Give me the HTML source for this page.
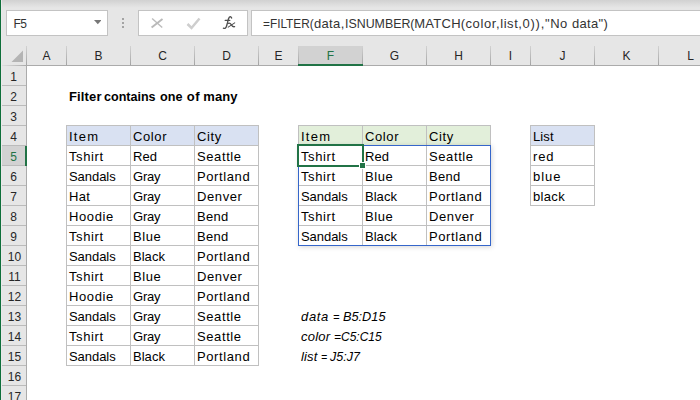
<!DOCTYPE html>
<html><head><meta charset="utf-8"><title>Excel</title><style>
html,body{margin:0;padding:0;}
body{width:700px;height:400px;overflow:hidden;background:#fff;position:relative;font-family:"Liberation Sans",sans-serif;}
div,span{position:absolute;box-sizing:border-box;}
.t{white-space:nowrap;line-height:1;}
.hl{font-size:12px;color:#262626;text-align:center;}
.c{font-size:13px;letter-spacing:0.6px;color:#000;}
</style></head><body>
<div style="left:0;top:0;width:700px;height:66px;background:#e6e6e6"></div>
<div style="left:0;top:0;width:700px;height:8px;background:linear-gradient(to bottom,#d1d1d1 0%,#dcdcdc 50%,#e6e6e6 100%)"></div>
<div style="left:0;top:66px;width:27px;height:334px;background:#e6e6e6"></div>
<div style="left:6px;top:10px;width:102px;height:26px;background:#fff;border:1px solid #c3c3c3"></div>
<div class="t" style="left:13.5px;top:18px;font-size:12px;letter-spacing:-0.5px;color:#333">F5</div>
<svg style="position:absolute;left:93.6px;top:20px" width="7.6" height="4.75" viewBox="0 0 8 5"><path d="M0 0H8L4 4.5Z" fill="#777"/></svg>
<div style="left:122px;top:18px;width:2px;height:2px;background:#a3a3a3"></div>
<div style="left:122px;top:22px;width:2px;height:2px;background:#a3a3a3"></div>
<div style="left:122px;top:26px;width:2px;height:2px;background:#a3a3a3"></div>
<div style="left:138px;top:10px;width:110px;height:26px;background:#fff;border:1px solid #c3c3c3"></div>
<svg style="position:absolute;left:150px;top:17px" width="14" height="12" viewBox="0 0 14 12"><path d="M2.1 1.5L12.2 10.6" stroke="#bcbcbc" stroke-width="1.4" fill="none"/><path d="M12.5 2.0L1.6 10.6" stroke="#b9b9b9" stroke-width="1.9" fill="none"/></svg>
<svg style="position:absolute;left:186px;top:16px" width="16" height="14" viewBox="0 0 16 14"><path d="M1.5 8L5.5 12L13.5 2.5" stroke="#cecece" stroke-width="2.5" fill="none"/></svg>
<svg style="position:absolute;left:218px;top:12px" width="24" height="22" viewBox="0 0 24 22"><g fill="none" stroke="#505050" stroke-linecap="round"><path d="M13.6 6.0C13.6 4.7 12.2 4.4 11.3 5.3C10.3 6.4 10.0 8.4 9.4 11.0L8.5 14.3C8.0 16.0 6.9 16.9 5.4 16.2" stroke-width="1.35"/><path d="M7.2 8.4H11.8" stroke-width="1.2"/><path d="M10.4 11.3C11.9 10.9 12.6 11.6 13.4 12.9C14.2 14.2 15.0 15.1 16.6 14.7" stroke-width="1.3"/><path d="M16.7 10.9L10.2 15.1" stroke-width="1.05"/></g></svg>
<div style="left:251px;top:10px;width:460px;height:26px;background:#fff;border:1px solid #c3c3c3"></div>
<div class="t" style="left:263.2px;top:17px;font-size:13px;color:#333;white-space:pre;transform:scaleX(0.9094);transform-origin:0 0">=FILTER(</div>
<div class="t" style="left:313.9px;top:17px;font-size:13px;color:#333;white-space:pre;letter-spacing:0.376px">data,</div>
<div class="t" style="left:344.7px;top:17px;font-size:13px;color:#333;white-space:pre;transform:scaleX(0.9527);transform-origin:0 0">ISNUMBER(</div>
<div class="t" style="left:414.2px;top:17px;font-size:13px;color:#333;white-space:pre;letter-spacing:0.285px">MATCH(</div>
<div class="t" style="left:465.5px;top:17px;font-size:13px;color:#333;white-space:pre;letter-spacing:0.603px">color,</div>
<div class="t" style="left:500.2px;top:17px;font-size:13px;color:#333;white-space:pre;letter-spacing:0.560px">list,</div>
<div class="t" style="left:522.5px;top:17px;font-size:13px;color:#333;white-space:pre;letter-spacing:0.775px">0)),</div>
<div class="t" style="left:545.1px;top:17px;font-size:13px;color:#333;white-space:pre;letter-spacing:0.510px">&quot;No </div>
<div class="t" style="left:572.0px;top:17px;font-size:13px;color:#333;white-space:pre;letter-spacing:0.292px">data&quot;)</div>
<div style="left:298px;top:46px;width:65px;height:20px;background:#d2d2d2"></div>
<div class="t hl" style="left:27px;top:50px;width:39px;color:#262626">A</div>
<div class="t hl" style="left:67px;top:50px;width:63px;color:#262626">B</div>
<div class="t hl" style="left:131px;top:50px;width:63px;color:#262626">C</div>
<div class="t hl" style="left:195px;top:50px;width:63px;color:#262626">D</div>
<div class="t hl" style="left:259px;top:50px;width:39px;color:#262626">E</div>
<div class="t hl" style="left:299px;top:50px;width:63px;color:#217346">F</div>
<div class="t hl" style="left:363px;top:50px;width:63px;color:#262626">G</div>
<div class="t hl" style="left:427px;top:50px;width:63px;color:#262626">H</div>
<div class="t hl" style="left:491px;top:50px;width:39px;color:#262626">I</div>
<div class="t hl" style="left:531px;top:50px;width:63px;color:#262626">J</div>
<div class="t hl" style="left:595px;top:50px;width:63px;color:#262626">K</div>
<div class="t hl" style="left:659px;top:50px;width:63px;color:#262626">L</div>
<div style="left:26px;top:46px;width:1px;height:20px;background:linear-gradient(to bottom,#d2d2d2,#a2a2a2)"></div>
<div style="left:66px;top:46px;width:1px;height:20px;background:linear-gradient(to bottom,#d2d2d2,#a2a2a2)"></div>
<div style="left:130px;top:46px;width:1px;height:20px;background:linear-gradient(to bottom,#d2d2d2,#a2a2a2)"></div>
<div style="left:194px;top:46px;width:1px;height:20px;background:linear-gradient(to bottom,#d2d2d2,#a2a2a2)"></div>
<div style="left:258px;top:46px;width:1px;height:20px;background:linear-gradient(to bottom,#d2d2d2,#a2a2a2)"></div>
<div style="left:298px;top:46px;width:1px;height:20px;background:linear-gradient(to bottom,#d2d2d2,#a2a2a2)"></div>
<div style="left:362px;top:46px;width:1px;height:20px;background:linear-gradient(to bottom,#d2d2d2,#a2a2a2)"></div>
<div style="left:426px;top:46px;width:1px;height:20px;background:linear-gradient(to bottom,#d2d2d2,#a2a2a2)"></div>
<div style="left:490px;top:46px;width:1px;height:20px;background:linear-gradient(to bottom,#d2d2d2,#a2a2a2)"></div>
<div style="left:530px;top:46px;width:1px;height:20px;background:linear-gradient(to bottom,#d2d2d2,#a2a2a2)"></div>
<div style="left:594px;top:46px;width:1px;height:20px;background:linear-gradient(to bottom,#d2d2d2,#a2a2a2)"></div>
<div style="left:658px;top:46px;width:1px;height:20px;background:linear-gradient(to bottom,#d2d2d2,#a2a2a2)"></div>
<div style="left:2px;top:65px;width:698px;height:1px;background:#ababab"></div>
<div style="left:2px;top:65px;width:24px;height:1px;background:linear-gradient(to right,#dedede,#ababab)"></div>
<div style="left:298px;top:64px;width:65px;height:2px;background:#217346"></div>
<svg style="position:absolute;left:11px;top:50px" width="13" height="13" viewBox="0 0 13 13"><path d="M12 0.5V12H0.5Z" fill="#b4b4b4"/></svg>
<div style="left:2px;top:146px;width:24px;height:20px;background:#d2d2d2"></div>
<div class="t hl" style="left:1.7px;top:71px;width:24px;color:#262626">1</div>
<div style="left:2px;top:85px;width:25px;height:1px;background:#bbbbbb"></div>
<div class="t hl" style="left:1.7px;top:91px;width:24px;color:#262626">2</div>
<div style="left:2px;top:105px;width:25px;height:1px;background:#bbbbbb"></div>
<div class="t hl" style="left:1.7px;top:111px;width:24px;color:#262626">3</div>
<div style="left:2px;top:125px;width:25px;height:1px;background:#bbbbbb"></div>
<div class="t hl" style="left:1.7px;top:131px;width:24px;color:#262626">4</div>
<div style="left:2px;top:145px;width:25px;height:1px;background:#bbbbbb"></div>
<div class="t hl" style="left:1.7px;top:151px;width:24px;color:#217346">5</div>
<div style="left:2px;top:165px;width:25px;height:1px;background:#bbbbbb"></div>
<div class="t hl" style="left:1.7px;top:171px;width:24px;color:#262626">6</div>
<div style="left:2px;top:185px;width:25px;height:1px;background:#bbbbbb"></div>
<div class="t hl" style="left:1.7px;top:191px;width:24px;color:#262626">7</div>
<div style="left:2px;top:205px;width:25px;height:1px;background:#bbbbbb"></div>
<div class="t hl" style="left:1.7px;top:211px;width:24px;color:#262626">8</div>
<div style="left:2px;top:225px;width:25px;height:1px;background:#bbbbbb"></div>
<div class="t hl" style="left:1.7px;top:231px;width:24px;color:#262626">9</div>
<div style="left:2px;top:245px;width:25px;height:1px;background:#bbbbbb"></div>
<div class="t hl" style="left:2.5px;top:251px;width:24px;color:#262626">10</div>
<div style="left:2px;top:265px;width:25px;height:1px;background:#bbbbbb"></div>
<div class="t hl" style="left:2.5px;top:271px;width:24px;color:#262626">11</div>
<div style="left:2px;top:285px;width:25px;height:1px;background:#bbbbbb"></div>
<div class="t hl" style="left:2.5px;top:291px;width:24px;color:#262626">12</div>
<div style="left:2px;top:305px;width:25px;height:1px;background:#bbbbbb"></div>
<div class="t hl" style="left:2.5px;top:311px;width:24px;color:#262626">13</div>
<div style="left:2px;top:325px;width:25px;height:1px;background:#bbbbbb"></div>
<div class="t hl" style="left:2.5px;top:331px;width:24px;color:#262626">14</div>
<div style="left:2px;top:345px;width:25px;height:1px;background:#bbbbbb"></div>
<div class="t hl" style="left:2.5px;top:351px;width:24px;color:#262626">15</div>
<div style="left:2px;top:365px;width:25px;height:1px;background:#bbbbbb"></div>
<div class="t hl" style="left:2.5px;top:371px;width:24px;color:#262626">16</div>
<div style="left:2px;top:385px;width:25px;height:1px;background:#bbbbbb"></div>
<div class="t hl" style="left:2.5px;top:391px;width:24px;color:#262626">17</div>
<div style="left:2px;top:405px;width:25px;height:1px;background:#bbbbbb"></div>
<div style="left:26px;top:66px;width:1px;height:334px;background:#ababab"></div>
<div style="left:25px;top:146px;width:2px;height:20px;background:#217346"></div>
<div style="left:0;top:0;width:1px;height:400px;background:#0f6f3a"></div>
<div style="left:1px;top:0;width:1px;height:400px;background:#ebe8ea"></div>
<div style="left:66px;top:125px;width:192px;height:20px;background:#d9e1f2"></div>
<div style="left:66px;top:125px;width:193px;height:1px;background:#c0c0c0"></div>
<div style="left:66px;top:145px;width:193px;height:1px;background:#c0c0c0"></div>
<div style="left:66px;top:165px;width:193px;height:1px;background:#c0c0c0"></div>
<div style="left:66px;top:185px;width:193px;height:1px;background:#c0c0c0"></div>
<div style="left:66px;top:205px;width:193px;height:1px;background:#c0c0c0"></div>
<div style="left:66px;top:225px;width:193px;height:1px;background:#c0c0c0"></div>
<div style="left:66px;top:245px;width:193px;height:1px;background:#c0c0c0"></div>
<div style="left:66px;top:265px;width:193px;height:1px;background:#c0c0c0"></div>
<div style="left:66px;top:285px;width:193px;height:1px;background:#c0c0c0"></div>
<div style="left:66px;top:305px;width:193px;height:1px;background:#c0c0c0"></div>
<div style="left:66px;top:325px;width:193px;height:1px;background:#c0c0c0"></div>
<div style="left:66px;top:345px;width:193px;height:1px;background:#c0c0c0"></div>
<div style="left:66px;top:365px;width:193px;height:1px;background:#c0c0c0"></div>
<div style="left:66px;top:125px;width:1px;height:241px;background:#c0c0c0"></div>
<div style="left:130px;top:125px;width:1px;height:241px;background:#c0c0c0"></div>
<div style="left:194px;top:125px;width:1px;height:241px;background:#c0c0c0"></div>
<div style="left:258px;top:125px;width:1px;height:241px;background:#c0c0c0"></div>
<div class="t c" style="left:69px;top:130px;letter-spacing:1.25px">Item</div>
<div class="t c" style="left:133px;top:130px">Color</div>
<div class="t c" style="left:197px;top:130px">City</div>
<div class="t c" style="left:69px;top:150px">Tshirt</div>
<div class="t c" style="left:133px;top:150px;letter-spacing:0.1px">Red</div>
<div class="t c" style="left:197px;top:150px">Seattle</div>
<div class="t c" style="left:69px;top:170px;letter-spacing:-0.05px">Sandals</div>
<div class="t c" style="left:133px;top:170px;letter-spacing:-0.2px">Gray</div>
<div class="t c" style="left:197px;top:170px">Portland</div>
<div class="t c" style="left:69px;top:190px;letter-spacing:0.3px">Hat</div>
<div class="t c" style="left:133px;top:190px;letter-spacing:-0.2px">Gray</div>
<div class="t c" style="left:197px;top:190px">Denver</div>
<div class="t c" style="left:69px;top:210px">Hoodie</div>
<div class="t c" style="left:133px;top:210px;letter-spacing:-0.2px">Gray</div>
<div class="t c" style="left:197px;top:210px;letter-spacing:0.27px">Bend</div>
<div class="t c" style="left:69px;top:230px">Tshirt</div>
<div class="t c" style="left:133px;top:230px">Blue</div>
<div class="t c" style="left:197px;top:230px;letter-spacing:0.27px">Bend</div>
<div class="t c" style="left:69px;top:250px;letter-spacing:-0.05px">Sandals</div>
<div class="t c" style="left:133px;top:250px;letter-spacing:0.03px">Black</div>
<div class="t c" style="left:197px;top:250px">Portland</div>
<div class="t c" style="left:69px;top:270px">Tshirt</div>
<div class="t c" style="left:133px;top:270px">Blue</div>
<div class="t c" style="left:197px;top:270px">Denver</div>
<div class="t c" style="left:69px;top:290px">Hoodie</div>
<div class="t c" style="left:133px;top:290px;letter-spacing:-0.2px">Gray</div>
<div class="t c" style="left:197px;top:290px">Portland</div>
<div class="t c" style="left:69px;top:310px;letter-spacing:-0.05px">Sandals</div>
<div class="t c" style="left:133px;top:310px;letter-spacing:-0.2px">Gray</div>
<div class="t c" style="left:197px;top:310px">Seattle</div>
<div class="t c" style="left:69px;top:330px">Tshirt</div>
<div class="t c" style="left:133px;top:330px;letter-spacing:-0.2px">Gray</div>
<div class="t c" style="left:197px;top:330px">Seattle</div>
<div class="t c" style="left:69px;top:350px;letter-spacing:-0.05px">Sandals</div>
<div class="t c" style="left:133px;top:350px;letter-spacing:0.03px">Black</div>
<div class="t c" style="left:197px;top:350px">Portland</div>
<div style="left:298px;top:125px;width:192px;height:20px;background:#e2efda"></div>
<div style="left:298px;top:125px;width:193px;height:1px;background:#c0c0c0"></div>
<div style="left:298px;top:145px;width:193px;height:1px;background:#c0c0c0"></div>
<div style="left:298px;top:165px;width:193px;height:1px;background:#c0c0c0"></div>
<div style="left:298px;top:185px;width:193px;height:1px;background:#c0c0c0"></div>
<div style="left:298px;top:205px;width:193px;height:1px;background:#c0c0c0"></div>
<div style="left:298px;top:225px;width:193px;height:1px;background:#c0c0c0"></div>
<div style="left:298px;top:245px;width:193px;height:1px;background:#c0c0c0"></div>
<div style="left:298px;top:125px;width:1px;height:121px;background:#c0c0c0"></div>
<div style="left:362px;top:125px;width:1px;height:121px;background:#c0c0c0"></div>
<div style="left:426px;top:125px;width:1px;height:121px;background:#c0c0c0"></div>
<div style="left:490px;top:125px;width:1px;height:121px;background:#c0c0c0"></div>
<div class="t c" style="left:301px;top:130px;letter-spacing:1.25px">Item</div>
<div class="t c" style="left:365px;top:130px">Color</div>
<div class="t c" style="left:429px;top:130px">City</div>
<div class="t c" style="left:301px;top:150px">Tshirt</div>
<div class="t c" style="left:365px;top:150px;letter-spacing:0.1px">Red</div>
<div class="t c" style="left:429px;top:150px">Seattle</div>
<div class="t c" style="left:301px;top:170px">Tshirt</div>
<div class="t c" style="left:365px;top:170px">Blue</div>
<div class="t c" style="left:429px;top:170px;letter-spacing:0.27px">Bend</div>
<div class="t c" style="left:301px;top:190px;letter-spacing:-0.05px">Sandals</div>
<div class="t c" style="left:365px;top:190px;letter-spacing:0.03px">Black</div>
<div class="t c" style="left:429px;top:190px">Portland</div>
<div class="t c" style="left:301px;top:210px">Tshirt</div>
<div class="t c" style="left:365px;top:210px">Blue</div>
<div class="t c" style="left:429px;top:210px">Denver</div>
<div class="t c" style="left:301px;top:230px;letter-spacing:-0.05px">Sandals</div>
<div class="t c" style="left:365px;top:230px;letter-spacing:0.03px">Black</div>
<div class="t c" style="left:429px;top:230px">Portland</div>
<div style="left:530px;top:125px;width:64px;height:20px;background:#d9e1f2"></div>
<div style="left:530px;top:125px;width:65px;height:1px;background:#c0c0c0"></div>
<div style="left:530px;top:145px;width:65px;height:1px;background:#c0c0c0"></div>
<div style="left:530px;top:165px;width:65px;height:1px;background:#c0c0c0"></div>
<div style="left:530px;top:185px;width:65px;height:1px;background:#c0c0c0"></div>
<div style="left:530px;top:205px;width:65px;height:1px;background:#c0c0c0"></div>
<div style="left:530px;top:125px;width:1px;height:81px;background:#c0c0c0"></div>
<div style="left:594px;top:125px;width:1px;height:81px;background:#c0c0c0"></div>
<div class="t c" style="left:533px;top:130px;letter-spacing:0.1px">List</div>
<div class="t c" style="left:533px;top:150px;letter-spacing:0.8px">red</div>
<div class="t c" style="left:533px;top:170px;letter-spacing:0.97px">blue</div>
<div class="t c" style="left:533px;top:190px;letter-spacing:0.32px">black</div>
<div class="t" style="left:69px;top:90px;font-size:13px;font-weight:bold;color:#000;letter-spacing:0.15px">Filter</div>
<div class="t" style="left:104.4px;top:90px;font-size:13px;font-weight:bold;color:#000;transform:scaleX(0.965);transform-origin:0 0">contains</div>
<div class="t" style="left:159.9px;top:90px;font-size:13px;font-weight:bold;color:#000;transform:scaleX(0.97);transform-origin:0 0">one</div>
<div class="t" style="left:186.8px;top:90px;font-size:13px;font-weight:bold;color:#000;letter-spacing:0.5px">of</div>
<div class="t" style="left:203.3px;top:90px;font-size:13px;font-weight:bold;color:#000;letter-spacing:0.1px">many</div>
<div class="t" style="left:301.0px;top:310px;font-size:13px;font-style:italic;color:#000;white-space:pre;letter-spacing:0.676px">data </div>
<div class="t" style="left:333.3px;top:310px;font-size:13px;font-style:italic;color:#000;white-space:pre;transform:scaleX(0.8556);transform-origin:0 0">= </div>
<div class="t" style="left:342.9px;top:310px;font-size:13px;font-style:italic;color:#000;white-space:pre;transform:scaleX(0.9797);transform-origin:0 0">B5:D15</div>
<div class="t" style="left:301.0px;top:330px;font-size:13px;font-style:italic;color:#000;white-space:pre;letter-spacing:0.233px">color </div>
<div class="t" style="left:334.2px;top:330px;font-size:13px;font-style:italic;color:#000;white-space:pre;transform:scaleX(0.9232);transform-origin:0 0">=C5:C15</div>
<div class="t" style="left:301.0px;top:350px;font-size:13px;font-style:italic;color:#000;white-space:pre;letter-spacing:0.120px">list </div>
<div class="t" style="left:321.1px;top:350px;font-size:13px;font-style:italic;color:#000;white-space:pre;transform:scaleX(0.8111);transform-origin:0 0">= </div>
<div class="t" style="left:330.2px;top:350px;font-size:13px;font-style:italic;color:#000;white-space:pre;transform:scaleX(0.9620);transform-origin:0 0">J5:J7</div>
<div style="left:298px;top:145px;width:193px;height:101px;border:1px solid #3566ca;box-shadow:1px 1px 5px rgba(0,0,0,0.16)"></div>
<div style="left:297px;top:144px;width:67px;height:23px;border:2px solid #217346"></div>
<div style="left:359px;top:162px;width:7px;height:7px;background:#fff"></div>
<div style="left:360px;top:163px;width:5px;height:5px;background:#217346"></div>
</body></html>
